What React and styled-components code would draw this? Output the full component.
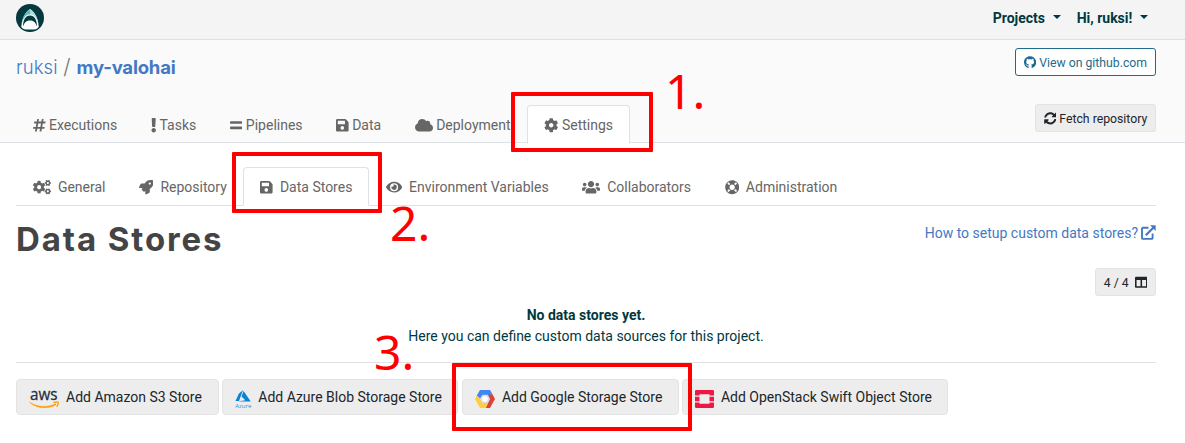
import React from "react";
import styled, { createGlobalStyle, css } from "styled-components";
import {
  FaHashtag, FaExclamation, FaEquals, FaSave, FaCloud, FaCog, FaGithub, FaSyncAlt,
  FaCogs, FaRocket, FaEye, FaUsers, FaLifeRing, FaColumns,
} from "react-icons/fa";

const Global = createGlobalStyle`
  *, *::before, *::after { box-sizing: border-box; }
  body {
    margin: 0;
    background: #fff;
    color: #003840;
    font: 14px/21px Roboto, sans-serif;
    overflow: hidden;
  }
`;

const Page = styled.div`
  position: relative;
  height: 443px;
  overflow: hidden;
`;

const TopBar = styled.header`
  display: flex;
  align-items: center;
  justify-content: space-between;
  height: 40px;
  padding: 0 37px 3px 16px;
  background: #f4f4f4;
  border-bottom: 1px solid #e0e0e0;
`;

const Logo = styled.svg`
  display: block;
  width: 28px;
  height: 28px;
`;

const UserMenu = styled.nav`
  display: flex;
  gap: 16px;
`;

const MenuItem = styled.a`
  display: flex;
  align-items: center;
  gap: 7.7px;
  font-weight: 700;
  &::after {
    content: "";
    border: 4px solid transparent;
    border-top-color: #003840;
    border-bottom: 0;
    margin-top: -3px;
  }
`;

const ProjectHeader = styled.section`
  height: 103px;
  padding-top: 8px;
  background: #fafafa;
  border-bottom: 1px solid #dee2e6;
`;

const ProjectRow = styled.div`
  display: flex;
  justify-content: space-between;
  height: 56px;
  padding: 0 29px 0 16px;
`;

const Breadcrumb = styled.h2`
  margin: 5px 0 0;
  font: 300 18.5px/28px Inter, sans-serif;
  letter-spacing: 0.1px;
  color: #4379c4;
  b { font-weight: 700; letter-spacing: -0.2px; }
  span { color: #777; margin: 0 6px 0 5.5px; font-size: 21px; line-height: 20px; }
`;

const SmallButton = styled.button`
  display: flex;
  align-items: center;
  justify-content: center;
  gap: ${(p) => p.$gap || 3}px;
  width: ${(p) => p.$width}px;
  height: 28px;
  padding: 1px 0 0;
  border: 1px solid #e3e3e3;
  border-radius: 3px;
  background: #ededed;
  color: #212529;
  font: 12.25px/18px Roboto, sans-serif;
  white-space: nowrap;
  ${(p) => p.$outline && css`
    background: #fff;
    border-color: #1f6b8c;
    color: #1f6b8c;
  `}
`;

const TabRow = styled.div`
  display: flex;
  justify-content: space-between;
  padding: 0 29px 0 16px;
`;

const Tabs = styled.nav`
  display: flex;
  ${(p) => p.$underlined && css`
    margin: 24px 29px 0 16px;
    height: 39px;
    border-bottom: 1px solid #dee2e6;
  `}
`;

const Tab = styled.a`
  display: flex;
  align-items: center;
  gap: ${(p) => p.$gap}px;
  height: 39px;
  margin-top: ${(p) => p.$lift || 0}px;
  padding: 2px 15.6px 0 16px;
  border: 1px solid transparent;
  border-radius: 4px 4px 0 0;
  color: #666;
  white-space: nowrap;
  ${(p) => p.$active && css`
    background: #fff;
    border-color: #dee2e6 #dee2e6 #fff;
  `}
`;

const Icon = styled.span`
  display: inline-flex;
  flex: none;
  svg {
    width: ${(p) => (p.$ratio * (p.$size || 14.4)) / 512}px;
    height: ${(p) => p.$size || 14.4}px;
  }
`;

const TitleRow = styled.div`
  display: flex;
  justify-content: space-between;
  height: 62px;
  padding: 0 29px 0 16px;
`;

const Title = styled.h1`
  margin: 13px 0 0;
  font: 700 33px/40px Inter, sans-serif;
  letter-spacing: 1.9px;
  color: #444;
`;

const HelpLink = styled.a`
  display: flex;
  align-items: center;
  gap: 3px;
  height: 22px;
  margin-top: 16px;
  color: #4379c4;
  svg { margin-top: -1px; }
`;

const Toolbar = styled.div`
  display: flex;
  justify-content: flex-end;
  padding-right: 29px;
`;

const EmptyState = styled.div`
  margin: 8px 29px 0 16px;
  height: 59px;
  border-bottom: 1px solid #e2e2e2;
  text-align: center;
  padding-top: 1px;
  b { display: block; }
`;

const StoreButtons = styled.div`
  display: flex;
  gap: 3.3px;
  padding: 16px 0 0 16px;
`;

const StoreButton = styled.button`
  display: flex;
  align-items: center;
  gap: ${(p) => p.$gap}px;
  width: ${(p) => p.$width}px;
  height: 36px;
  padding: 1px 0 0 12px;
  border: 1px solid #e3e3e3;
  border-radius: 4px;
  background: #ededed;
  color: #212529;
  font: 14px/21px Roboto, sans-serif;
  white-space: nowrap;
  svg { flex: none; margin-top: 3px; overflow: visible; }
`;

const Highlight = styled.div`
  position: absolute;
  left: ${(p) => p.$x}px;
  top: ${(p) => p.$y}px;
  width: ${(p) => p.$w}px;
  height: ${(p) => p.$h}px;
  border: 4px solid #f00;
  border-radius: 1px;
`;

const Step = styled.div`
  position: absolute;
  left: ${(p) => p.$x}px;
  top: ${(p) => p.$y}px;
  font: 48px/48px "Noto Sans", sans-serif;
  color: #f00;
`;

const projectTabs = [
  ["Executions", FaHashtag, 448],
  ["Tasks", FaExclamation, 192],
  ["Pipelines", FaEquals, 448],
  ["Data", FaSave, 448],
  ["Deployment", FaCloud, 640],
  ["Settings", FaCog, 512],
];

const settingsTabs = [
  ["General", FaCogs, 640],
  ["Repository", FaRocket, 512],
  ["Data Stores", FaSave, 448],
  ["Environment Variables", FaEye, 576],
  ["Collaborators", FaUsers, 640],
  ["Administration", FaLifeRing, 512],
];

const SharkLogo = () => (
  <Logo viewBox="0 0 28 28">
    <circle cx="14" cy="14" r="14" fill="#063840" />
    <path d="M14 5C9.500 8 6 14 5.300 22.500Q6 25 10 25.500H18Q22 25 22.700 22.500C22 14 18.500 8 14 5Z" fill="#fff" />
    <path d="M14 5C9.500 8 6.500 13 5.500 20C8 12 10.500 10.500 14 10.500Z" fill="#5fb9bd" />
    <path d="M14 5C18.500 8 21.500 13 22.500 20C20 12 17.500 10.500 14 10.500Z" fill="#a9dcdc" />
    <path d="M14 11.500C9.500 11.500 7 16 7 22.500C8.500 18 11 16.500 14 16.500S19.500 18 21 22.500C21 16 18.500 11.500 14 11.500Z" fill="#063840" />
  </Logo>
);

const ExternalLink = () => (
  <svg width="15" height="15" viewBox="0 0 15 15" fill="none" stroke="currentColor" strokeWidth="1.900">
    <path d="M7.500 2.800H2Q1 2.800 1 3.800V12.900Q1 13.900 2 13.900H10.500Q11.600 13.900 11.600 12.900V8.500" />
    <path d="M4.800 10.200L12.800 2.200" strokeWidth="2.200" />
    <path d="M9 .2H14.700V5.900Z" fill="currentColor" stroke="none" />
  </svg>
);

const AwsLogo = () => (
  <svg width="31" height="20" viewBox="0 0 31 20">
    <text x="1" y="11" fontFamily="Open Sans, sans-serif" fontWeight="400" fontSize="16.500" textLength="27.500" lengthAdjust="spacingAndGlyphs" fill="#252f3e" stroke="#252f3e" strokeWidth=".3">aws</text>
    <path d="M.5 13.200C8 18.300 19 18.600 27 14.800L26.500 16C18.500 20.300 7.500 19.500 .5 13.200Z" fill="#f90" stroke="#f90" strokeWidth=".5" />
    <path d="M24.500 13.600Q28.500 12.300 29.300 13.200Q29.500 15.500 27.700 18" fill="none" stroke="#f90" strokeWidth="1.200" />
  </svg>
);

const AzureLogo = () => (
  <svg width="17" height="20" viewBox="0 0 17 20">
    <path d="M8 1L3.800 4.700L.5 12H4Z" fill="#0b83d4" />
    <path d="M8.600 2L6.500 7.500L10.300 11.300L3 12.600H15.700Z" fill="#0b83d4" />
    <text x="0.300" y="18.500" fontFamily="Open Sans, sans-serif" fontSize="6" textLength="16" lengthAdjust="spacingAndGlyphs" fill="#2595dc">Azure</text>
  </svg>
);

const GoogleLogo = () => (
  <svg width="20" height="18" viewBox="0 0 20 18">
    <path d="M5 0H15L17.300 4L14 6.500L12.700 5H7.300L5 9L1.800 5.500Z" fill="#4285f4" />
    <path d="M17.300 4L20 9L15 18H10.500L15 9L13 5.500Z" fill="#db4437" />
    <path d="M1.800 5.500L0 9L5 18H10.800L13 13H7.300L4.300 7.500Z" fill="#ffcd40" />
    <path d="M7.500 4.800H12.500L15 9L12.500 13.200H7.500L5 9Z" fill="#d9d9dc" />
    <circle cx="10" cy="9" r="2.900" fill="#fff" />
  </svg>
);

const OpenStackLogo = () => (
  <svg width="19" height="18" viewBox="0 0 19 18" fill="#ed1944">
    <path d="M1.300 0H17.700Q19 0 19 1.300V5.500H14.500V4.200H4.500V5.500H0V1.300Q0 0 1.300 0Z" />
    <path d="M0 6.800H4.500V11.200H0ZM14.500 6.800H19V11.200H14.500Z" />
    <path d="M0 12.500H4.500V13.800H14.500V12.500H19V16.700Q19 18 17.700 18H1.300Q0 18 0 16.700Z" />
  </svg>
);

export default function App() {
  return (
    <Page>
      <Global />
      <TopBar>
        <SharkLogo />
        <UserMenu>
          <MenuItem>Projects</MenuItem>
          <MenuItem>Hi, ruksi!</MenuItem>
        </UserMenu>
      </TopBar>
      <ProjectHeader>
        <ProjectRow>
          <Breadcrumb>ruksi<span>/</span><b>my-valohai</b></Breadcrumb>
          <SmallButton $outline $width={141}>
            <Icon $ratio={496} $size={12.6}><FaGithub /></Icon>View on github.com
          </SmallButton>
        </ProjectRow>
        <TabRow>
          <Tabs>
            {projectTabs.map(([label, Glyph, ratio]) => (
              <Tab key={label} $gap={3.4} $lift={1} $active={label === "Settings"}>
                <Icon $ratio={ratio}><Glyph /></Icon>{label}
              </Tab>
            ))}
          </Tabs>
          <SmallButton $width={121}>
            <Icon $ratio={512} $size={12.6}><FaSyncAlt /></Icon>Fetch repository
          </SmallButton>
        </TabRow>
      </ProjectHeader>
      <Tabs $underlined>
        {settingsTabs.map(([label, Glyph, ratio]) => (
          <Tab key={label} $gap={6.9} $active={label === "Data Stores"}>
            <Icon $ratio={ratio}><Glyph /></Icon>{label}
          </Tab>
        ))}
      </Tabs>
      <TitleRow>
        <Title>Data Stores</Title>
        <HelpLink>How to setup custom data stores?<ExternalLink /></HelpLink>
      </TitleRow>
      <Toolbar>
        <SmallButton $width={61} $gap={6}>4 / 4<Icon $ratio={512} $size={12.6}><FaColumns /></Icon></SmallButton>
      </Toolbar>
      <EmptyState>
        <b>No data stores yet.</b>
        Here you can define custom data sources for this project.
      </EmptyState>
      <StoreButtons>
        <StoreButton $width={203} $gap={6}><AwsLogo />Add Amazon S3 Store</StoreButton>
        <StoreButton $width={236} $gap={6}><AzureLogo />Add Azure Blob Storage Store</StoreButton>
        <StoreButton $width={217} $gap={7.3}><GoogleLogo />Add Google Storage Store</StoreButton>
        <StoreButton $width={266} $gap={7}><OpenStackLogo />Add OpenStack Swift Object Store</StoreButton>
      </StoreButtons>
      <Highlight $x={511} $y={92} $w={142} $h={60} />
      <Highlight $x={232} $y={152} $w={150} $h={61} />
      <Highlight $x={452} $y={363} $w={240} $h={68} />
      <Step $x={665} $y={67}>1.</Step>
      <Step $x={390} $y={199}>2.</Step>
      <Step $x={374} $y={328}>3.</Step>
    </Page>
  );
}
